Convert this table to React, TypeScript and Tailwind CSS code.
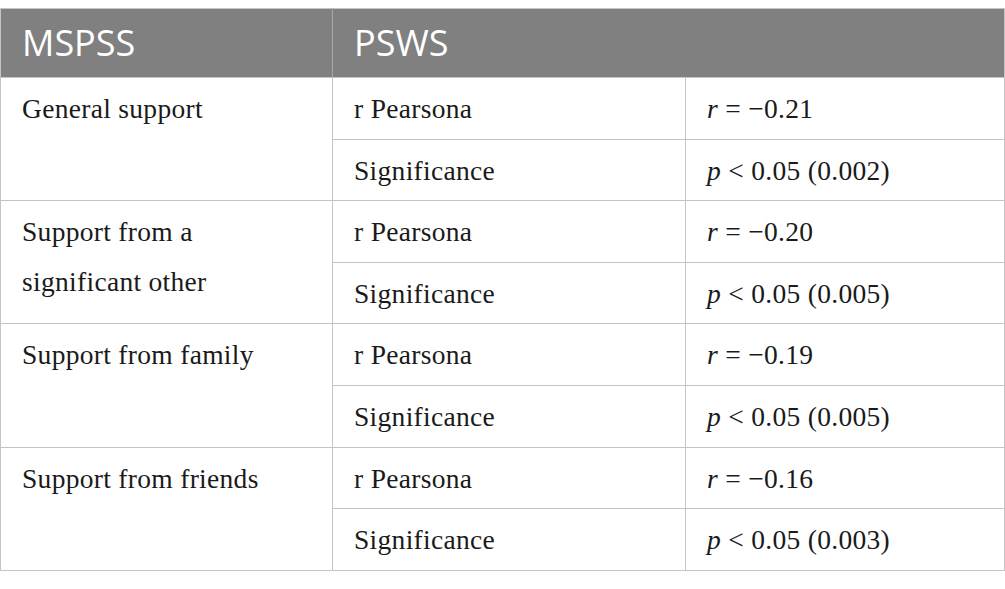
const rows = [
  { label: ['General support'], r: '0.21', p: '0.002' },
  { label: ['Support from a', 'significant other'], r: '0.20', p: '0.005' },
  { label: ['Support from family'], r: '0.19', p: '0.005' },
  { label: ['Support from friends'], r: '0.16', p: '0.003' },
]

const serif = { fontFamily: '"Liberation Serif", "Times New Roman", serif' }

export default function App() {
  return (
    <div className="w-[1005px] h-[589px] bg-white pt-2">
      <table
        className="w-[1005px] table-fixed border-collapse text-[#1a1a1a] font-['Liberation_Serif',serif] text-[27.5px] tracking-[0.3px]"
      >
        <colgroup>
          <col className="w-[332px]" />
          <col className="w-[353px]" />
          <col />
        </colgroup>
        <thead>
          <tr className="bg-[#7f807f] text-white font-['Open_Sans',sans-serif] text-[36px] tracking-normal">
            <th className="h-[69px] border border-[#c4c4c4] border-r-[#a8a8a8] px-[21px] text-left font-normal">
              MSPSS
            </th>
            <th colSpan={2} className="h-[69px] border border-[#c4c4c4] px-[21px] text-left font-normal">
              PSWS
            </th>
          </tr>
        </thead>
        <tbody>
          {rows.map((row) => (
            <Group key={row.label.join(' ')} {...row} />
          ))}
        </tbody>
      </table>
    </div>
  )
}

function Group({ label, r, p }: { label: string[]; r: string; p: string }) {
  const cell = 'border border-[#c4c4c4] px-[21px] pt-[6px] pb-[4.6px] leading-[50px]'
  return (
    <>
      <tr>
        <td rowSpan={2} className={`${cell} align-top`} style={serif}>
          {label.map((l, i) => (
            <div key={i}>{l}</div>
          ))}
        </td>
        <td className={cell}>r Pearsona</td>
        <td className={cell}>
          <i>r</i> = −{r}
        </td>
      </tr>
      <tr>
        <td className={cell}>Significance</td>
        <td className={cell}>
          <i>p</i> &lt; 0.05 ({p})
        </td>
      </tr>
    </>
  )
}
